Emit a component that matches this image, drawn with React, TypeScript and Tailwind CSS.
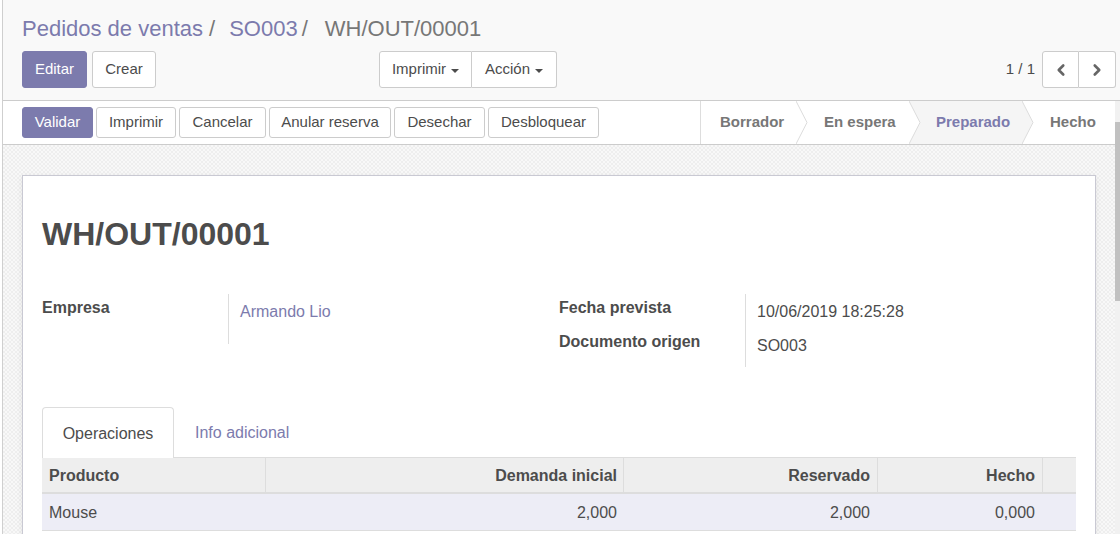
import React from "react";
import { ChevronLeft, ChevronRight } from "lucide-react";

const Caret = () => (
  <span className="inline-block ml-[5px] w-0 h-0 border-l-[4px] border-r-[4px] border-t-[4px] border-l-transparent border-r-transparent border-t-[#4c4c4c] translate-y-[1px]" />
);

type Stage = { label: string; w: string; pl: string; active?: boolean; last?: boolean };

const stages: Stage[] = [
  { label: "Borrador", w: "w-[96px]", pl: "pl-[19px]" },
  { label: "En espera", w: "w-[113px]", pl: "pl-[27px]" },
  { label: "Preparado", w: "w-[113px]", pl: "pl-[26px]", active: true },
  { label: "Hecho", w: "flex-1", pl: "pl-[27px]", last: true },
];

function StatusStage({ s, z }: { s: Stage; z: string }) {
  const bg = s.active ? "#f5f5f5" : "#ffffff";
  return (
    <div
      className={`relative h-full flex items-center ${s.w} ${s.pl} ${z} ${s.active ? "bg-[#f5f5f5] text-[#7c7bad]" : "bg-white text-[#777777]"} font-bold text-[15px]`}
    >
      <span>{s.label}</span>
      {!s.last && (
        <svg className="absolute top-0 right-[-11px] h-[43px] w-[12px]" viewBox="0 0 12 43">
          <polygon points="0,0 11,21.5 0,43" fill={bg} />
          <polyline points="0,0 11,21.5 0,43" fill="none" stroke="#dcdcdc" strokeWidth="1" />
        </svg>
      )}
    </div>
  );
}

export default function App() {
  const btn =
    "h-[37px] flex items-center justify-center border border-[#cccccc] bg-white text-[#4c4c4c] text-[15px] rounded-[3px]";
  const pbtn =
    "h-[37px] flex items-center justify-center border border-[#7c7bad] bg-[#7c7bad] text-white text-[15px] rounded-[3px]";
  const sbtn =
    "h-[31px] flex items-center justify-center border border-[#cccccc] bg-white text-[#4c4c4c] text-[15px] rounded-[3px]";
  const spbtn =
    "h-[31px] flex items-center justify-center border border-[#7c7bad] bg-[#7c7bad] text-white text-[15px] rounded-[3px]";
  return (
    <div className="relative w-[1120px] h-[534px] overflow-hidden bg-white font-['Liberation_Sans',Arial,sans-serif] text-[#4c4c4c]">
      <div className="ml-[2px] h-full border-l border-[#cfcfcf] flex flex-col">
        {/* Control panel */}
        <div className="h-[101px] shrink-0 bg-[#f9f9f9] border-b border-[#cccccc] pl-[19px] pr-[4px]">
          <div className="pt-[16px] flex text-[22px] leading-[25px] whitespace-nowrap">
            <span className="text-[#7c7bad]">Pedidos de ventas</span>
            <span className="text-[#777777] ml-[6px] mr-[14px]">/</span>
            <span className="text-[#7c7bad]">SO003</span>
            <span className="text-[#777777] ml-[4px] mr-[17px]">/</span>
            <span className="text-[#777777]">WH/OUT/00001</span>
          </div>
          <div className="mt-[10px] flex items-center">
            <div className="w-[357px] flex gap-[5px]">
              <div className={`${pbtn} w-[65px]`}>Editar</div>
              <div className={`${btn} w-[64px]`}>Crear</div>
            </div>
            <div className="flex">
              <div className={`${btn} w-[93px] rounded-r-none`}>
                Imprimir
                <Caret />
              </div>
              <div className={`${btn} w-[85px] rounded-l-none border-l-0`}>
                Acción
                <Caret />
              </div>
            </div>
            <div className="ml-auto flex items-center">
              <span className="text-[15px] text-[#4c4c4c] mr-[7px]">1 / 1</span>
              <div className="flex">
                <div className={`${btn} w-[37px] rounded-r-none text-[#666666]`}>
                  <ChevronLeft size={18} strokeWidth={3.5} />
                </div>
                <div className={`${btn} w-[37px] rounded-l-none border-l-0 text-[#666666]`}>
                  <ChevronRight size={18} strokeWidth={3.5} />
                </div>
              </div>
            </div>
          </div>
        </div>

        {/* Content */}
        <div className="flex-1 flex flex-col min-h-0">
          {/* Status bar */}
          <div className="h-[44px] shrink-0 bg-white border-b border-[#cccccc] flex items-center pl-[19px]">
            <div className="flex gap-[3px] items-center">
              <div className={`${spbtn} w-[71px]`}>Validar</div>
              <div className={`${sbtn} w-[80px]`}>Imprimir</div>
              <div className={`${sbtn} w-[87px]`}>Cancelar</div>
              <div className={`${sbtn} w-[122px]`}>Anular reserva</div>
              <div className={`${sbtn} w-[91px]`}>Desechar</div>
              <div className={`${sbtn} w-[111px]`}>Desbloquear</div>
            </div>
            <div className="ml-auto w-[420px] h-full flex border-l border-[#dddddd]">
              <StatusStage s={stages[0]} z="z-40" />
              <StatusStage s={stages[1]} z="z-30" />
              <StatusStage s={stages[2]} z="z-20" />
              <StatusStage s={stages[3]} z="z-10" />
            </div>
          </div>

          {/* Sheet background */}
          <div className="flex-1 min-h-0 overflow-hidden bg-[#f3f3f3] bg-[image:repeating-conic-gradient(#eeeeee_0%_25%,#f8f8f8_0%_50%)] bg-[length:4px_4px] pt-[30px] pl-[19px]">
            <div className="w-[1074px] bg-white border border-[#c9c9d3] shadow-[0_2px_6px_rgba(0,0,0,0.08)] px-[19px] pt-[40px] pb-[40px]">
              <h1 className="text-[32px] leading-[37px] font-bold text-[#4c4c4c]">WH/OUT/00001</h1>

              <div className="mt-[41px] grid grid-cols-2">
                <div>
                  <div className="flex h-[50px]">
                    <div className="w-[186px] pt-[2px] font-bold text-[16px]">Empresa</div>
                    <div className="flex-1 border-l border-[#dddddd] pl-[11px] pt-[6px] text-[16px] text-[#7c7bad]">
                      Armando Lio
                    </div>
                  </div>
                </div>
                <div>
                  <div className="flex h-[34px]">
                    <div className="w-[186px] pt-[2px] font-bold text-[16px]">Fecha prevista</div>
                    <div className="flex-1 border-l border-[#dddddd] pl-[11px] pt-[6px] text-[16px]">
                      10/06/2019 18:25:28
                    </div>
                  </div>
                  <div className="flex h-[39px]">
                    <div className="w-[186px] pt-[2px] font-bold text-[16px]">Documento origen</div>
                    <div className="flex-1 border-l border-[#dddddd] pl-[11px] pt-[6px] text-[16px]">SO003</div>
                  </div>
                </div>
              </div>

              {/* Tabs */}
              <div className="mt-[40px] flex h-[50px] text-[16px]">
                <div className="w-[132px] h-[51px] flex items-center justify-center border border-b-0 border-[#dddddd] rounded-t-[4px] bg-white text-[#4c4c4c] relative z-10 pt-[1px]">
                  Operaciones
                </div>
                <div className="h-full flex items-center pl-[21px] pt-[1px] text-[#7c7bad]">Info adicional</div>
              </div>

              {/* Table */}
              <div className="text-[16px]">
                <div className="flex h-[37px] bg-[#eeeeee] border-t border-[#dddddd] border-b-2 border-b-[#dddddd] font-bold text-[#4c4c4c]">
                  <div className="w-[223px] flex items-center pl-[7px] pt-[2px]">Producto</div>
                  <div className="w-[358px] flex items-center justify-end pr-[6px] pt-[2px] border-l border-[#dddddd]">
                    Demanda inicial
                  </div>
                  <div className="w-[254px] flex items-center justify-end pr-[7px] pt-[2px] border-l border-[#dddddd]">
                    Reservado
                  </div>
                  <div className="w-[165px] flex items-center justify-end pr-[7px] pt-[2px] border-l border-[#dddddd]">
                    Hecho
                  </div>
                  <div className="flex-1 border-l border-[#dddddd]" />
                </div>
                <div className="flex h-[37px] bg-[#ededf6] border-b border-[#dddddd] text-[#4c4c4c]">
                  <div className="w-[223px] flex items-center pl-[7px] pt-[1px]">Mouse</div>
                  <div className="w-[358px] flex items-center justify-end pr-[6px] pt-[1px]">2,000</div>
                  <div className="w-[254px] flex items-center justify-end pr-[7px] pt-[1px]">2,000</div>
                  <div className="w-[165px] flex items-center justify-end pr-[7px] pt-[1px]">0,000</div>
                  <div className="flex-1" />
                </div>
              </div>
            </div>
          </div>
        </div>
      </div>

      {/* Scrollbar (partially visible) */}
      <div className="absolute right-0 top-[101px] bottom-0 w-[5px] bg-[#f1f1f1] z-50">
        <div className="absolute left-0 right-0 top-[21px] h-[179px] bg-[#c1c1c1]" />
      </div>
    </div>
  );
}
